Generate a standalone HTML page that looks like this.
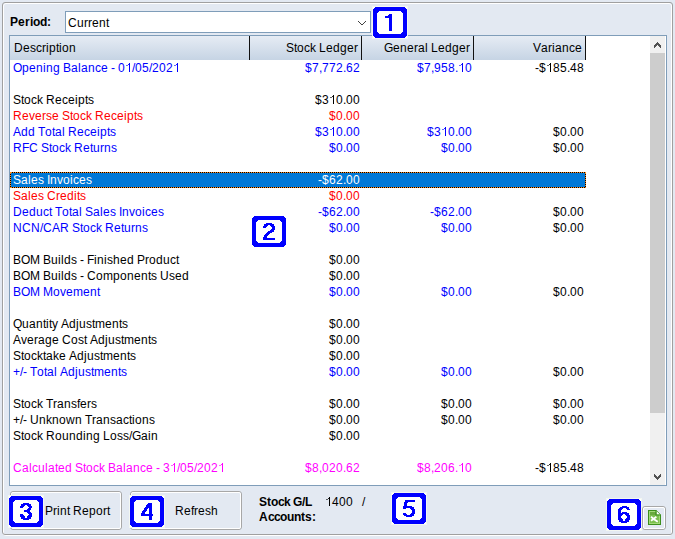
<!DOCTYPE html>
<html><head><meta charset="utf-8">
<style>
*{margin:0;padding:0;box-sizing:border-box}
html,body{width:675px;height:539px;overflow:hidden;background:#e3e9f2;font-family:"Liberation Sans",sans-serif;font-size:12px;color:#000}
.a{position:absolute}
.t{position:absolute;white-space:nowrap;line-height:16px}
.t s{display:inline-block;text-decoration:none;overflow:visible}
.t s.one{position:relative;color:transparent}
.one i{position:absolute;display:block}
.one .st{left:4px;top:3px;width:1px;height:9px}
.one .f1{left:3px;top:4px;width:1px;height:1px}
.one .f1{opacity:.85}
.one .f2{left:1px;top:5px;width:2px;height:1px;opacity:.6}
.l15 .one .st{top:2px}.l15 .one .f1{top:3px}.l15 .one .f2{top:4px}
.t .one i{background:#000}.bl .one i{background:#0000ff}.mg .one i{background:#ff00ff}.wh .one i{background:#fff}.rd .one i{background:#ff0000}
.bl{color:#0000ff}.rd{color:#ff0000}.mg{color:#ff00ff}.wh{color:#fff}
.box{position:absolute;width:34px;height:31px;background:#0000ff;
 clip-path:polygon(2px 0,32px 0,34px 2px,34px 29px,32px 31px,2px 31px,0 29px,0 2px)}
.box i{position:absolute;left:4px;top:4px;width:26px;height:23px;background:#fff;
 clip-path:polygon(2px 0,24px 0,26px 2px,26px 21px,24px 23px,2px 23px,0 21px,0 2px)}
.box b{position:absolute;left:0;top:0;width:34px;height:31px;text-align:center;line-height:31px;font-size:24px;font-weight:bold;color:#0000ff}
.halo{position:absolute;width:36px;height:33px;background:#fff;
 clip-path:polygon(3px 0,33px 0,36px 3px,36px 30px,33px 33px,3px 33px,0 30px,0 3px)}
.btn{position:absolute;border:1px solid #a7a7a7;border-radius:3px;background:#e3e9f2}
.btn:before{content:"";position:absolute;left:0;top:0;right:0;bottom:0;border:1px solid #fff;border-radius:2px}
</style></head><body>
<div class="a" style="left:3px;top:3px;width:669px;height:533px;border:1px solid #fff;border-radius:3px"></div>
<div class="a" style="left:2px;top:2px;width:671px;height:533px;border:1px solid #a0a0a0;border-radius:3px"></div>
<div class="t" style="left:10px;top:14px;font-weight:bold;"><s style="width:8px">P</s><s style="width:7px">e</s><s style="width:5px">r</s><s style="width:3px">i</s><s style="width:7px">o</s><s style="width:7px">d</s><s style="width:4px">:</s></div>
<div class="a" style="left:65px;top:11px;width:306px;height:22px;background:#fff;border:1px solid #7f9db9"></div>
<div class="t" style="left:68px;top:15px;"><s style="width:9px">C</s><s style="width:7px">u</s><s style="width:4px">r</s><s style="width:4px">r</s><s style="width:7px">e</s><s style="width:7px">n</s><s style="width:3px">t</s></div>
<svg class="a" style="left:354px;top:16px" width="16" height="12" shape-rendering="crispEdges"><path d="M4 5h1v1h-1zM11 5h1v1h-1zM5 6h1v1h-1zM10 6h1v1h-1zM6 7h1v1h-1zM9 7h1v1h-1zM7 8h2v1h-2z" fill="#404040"/></svg>
<div class="a" style="left:9px;top:35px;width:658px;height:451px;background:#fff;border:1px solid #7f9db9"></div>
<div class="a" style="left:10px;top:36px;width:576px;height:24px;background:linear-gradient(#e6ecf4,#c6d4e4)"></div>
<div class="a" style="left:249px;top:36px;width:1px;height:24px;background:#111"></div>
<div class="a" style="left:361px;top:36px;width:1px;height:24px;background:#111"></div>
<div class="a" style="left:473px;top:36px;width:1px;height:24px;background:#111"></div>
<div class="a" style="left:585px;top:36px;width:1px;height:24px;background:#111"></div>
<div class="t" style="left:14px;top:40px;"><s style="width:9px">D</s><s style="width:7px">e</s><s style="width:6px">s</s><s style="width:6px">c</s><s style="width:4px">r</s><s style="width:3px">i</s><s style="width:7px">p</s><s style="width:3px">t</s><s style="width:3px">i</s><s style="width:7px">o</s><s style="width:7px">n</s></div>
<div class="t" style="left:286px;top:40px;"><s style="width:8px">S</s><s style="width:3px">t</s><s style="width:7px">o</s><s style="width:6px">c</s><s style="width:6px">k</s><s style="width:3px">&nbsp;</s><s style="width:7px">L</s><s style="width:7px">e</s><s style="width:7px">d</s><s style="width:7px">g</s><s style="width:7px">e</s><s style="width:4px">r</s></div>
<div class="t" style="left:384px;top:40px;"><s style="width:9px">G</s><s style="width:7px">e</s><s style="width:7px">n</s><s style="width:7px">e</s><s style="width:4px">r</s><s style="width:7px">a</s><s style="width:3px">l</s><s style="width:3px">&nbsp;</s><s style="width:7px">L</s><s style="width:7px">e</s><s style="width:7px">d</s><s style="width:7px">g</s><s style="width:7px">e</s><s style="width:4px">r</s></div>
<div class="t" style="left:533px;top:40px;"><s style="width:8px">V</s><s style="width:7px">a</s><s style="width:4px">r</s><s style="width:3px">i</s><s style="width:7px">a</s><s style="width:7px">n</s><s style="width:6px">c</s><s style="width:7px">e</s></div>
<div class="a" style="left:650px;top:36px;width:15px;height:449px;background:#f0f0f0"></div>
<div class="a" style="left:650px;top:53px;width:15px;height:360px;background:#cdcdcd"></div>
<svg class="a" style="left:651px;top:39px" width="16" height="12" shape-rendering="crispEdges"><path d="M6 3h1v1h-1zM5 4h3v1h-3zM4 5h5v1h-5zM3 6h3v1h-3zM7 6h3v1h-3zM3 7h2v1h-2zM8 7h2v1h-2zM3 8h1v1h-1zM9 8h1v1h-1z" fill="#505050"/></svg>
<svg class="a" style="left:651px;top:471px" width="16" height="12" shape-rendering="crispEdges"><path d="M3 3h1v1h-1zM9 3h1v1h-1zM3 4h2v1h-2zM8 4h2v1h-2zM3 5h3v1h-3zM7 5h3v1h-3zM4 6h5v1h-5zM5 7h3v1h-3zM6 8h1v1h-1z" fill="#505050"/></svg>
<div class="a" style="left:10px;top:172px;width:576px;height:16px;background:#0078d7"></div>
<div class="a" style="left:10px;top:172px;width:576px;height:16px;border:1px solid #000"></div>
<div class="a" style="left:10px;top:172px;width:576px;height:16px;border:1px dotted #ff8c1a"></div>
<div class="t bl" style="left:13px;top:60px;"><s style="width:9px">O</s><s style="width:7px">p</s><s style="width:7px">e</s><s style="width:7px">n</s><s style="width:3px">i</s><s style="width:7px">n</s><s style="width:7px">g</s><s style="width:3px">&nbsp;</s><s style="width:8px">B</s><s style="width:7px">a</s><s style="width:3px">l</s><s style="width:7px">a</s><s style="width:7px">n</s><s style="width:6px">c</s><s style="width:7px">e</s><s style="width:3px">&nbsp;</s><s style="width:4px">-</s><s style="width:3px">&nbsp;</s><s style="width:7px">0</s><s class="one" style="width:7px">1<i class="st"></i><i class="f1"></i><i class="f2"></i></s><s style="width:3px">/</s><s style="width:7px">0</s><s style="width:7px">5</s><s style="width:3px">/</s><s style="width:7px">2</s><s style="width:7px">0</s><s style="width:7px">2</s><s class="one" style="width:7px">1<i class="st"></i><i class="f1"></i><i class="f2"></i></s></div>
<div class="t bl" style="left:305px;top:60px;"><s style="width:7px">$</s><s style="width:7px">7</s><s style="width:3px">,</s><s style="width:7px">7</s><s style="width:7px">7</s><s style="width:7px">2</s><s style="width:3px">.</s><s style="width:7px">6</s><s style="width:7px">2</s></div>
<div class="t bl" style="left:417px;top:60px;"><s style="width:7px">$</s><s style="width:7px">7</s><s style="width:3px">,</s><s style="width:7px">9</s><s style="width:7px">5</s><s style="width:7px">8</s><s style="width:3px">.</s><s class="one" style="width:7px">1<i class="st"></i><i class="f1"></i><i class="f2"></i></s><s style="width:7px">0</s></div>
<div class="t" style="left:535px;top:60px;"><s style="width:4px">-</s><s style="width:7px">$</s><s class="one" style="width:7px">1<i class="st"></i><i class="f1"></i><i class="f2"></i></s><s style="width:7px">8</s><s style="width:7px">5</s><s style="width:3px">.</s><s style="width:7px">4</s><s style="width:7px">8</s></div>
<div class="t" style="left:13px;top:92px;"><s style="width:8px">S</s><s style="width:3px">t</s><s style="width:7px">o</s><s style="width:6px">c</s><s style="width:6px">k</s><s style="width:3px">&nbsp;</s><s style="width:9px">R</s><s style="width:7px">e</s><s style="width:6px">c</s><s style="width:7px">e</s><s style="width:3px">i</s><s style="width:7px">p</s><s style="width:3px">t</s><s style="width:6px">s</s></div>
<div class="t" style="left:315px;top:92px;"><s style="width:7px">$</s><s style="width:7px">3</s><s class="one" style="width:7px">1<i class="st"></i><i class="f1"></i><i class="f2"></i></s><s style="width:7px">0</s><s style="width:3px">.</s><s style="width:7px">0</s><s style="width:7px">0</s></div>
<div class="t rd" style="left:13px;top:108px;"><s style="width:9px">R</s><s style="width:7px">e</s><s style="width:6px">v</s><s style="width:7px">e</s><s style="width:4px">r</s><s style="width:6px">s</s><s style="width:7px">e</s><s style="width:3px">&nbsp;</s><s style="width:8px">S</s><s style="width:3px">t</s><s style="width:7px">o</s><s style="width:6px">c</s><s style="width:6px">k</s><s style="width:3px">&nbsp;</s><s style="width:9px">R</s><s style="width:7px">e</s><s style="width:6px">c</s><s style="width:7px">e</s><s style="width:3px">i</s><s style="width:7px">p</s><s style="width:3px">t</s><s style="width:6px">s</s></div>
<div class="t rd" style="left:329px;top:108px;"><s style="width:7px">$</s><s style="width:7px">0</s><s style="width:3px">.</s><s style="width:7px">0</s><s style="width:7px">0</s></div>
<div class="t bl" style="left:13px;top:124px;"><s style="width:8px">A</s><s style="width:7px">d</s><s style="width:7px">d</s><s style="width:3px">&nbsp;</s><s style="width:7px">T</s><s style="width:7px">o</s><s style="width:3px">t</s><s style="width:7px">a</s><s style="width:3px">l</s><s style="width:3px">&nbsp;</s><s style="width:9px">R</s><s style="width:7px">e</s><s style="width:6px">c</s><s style="width:7px">e</s><s style="width:3px">i</s><s style="width:7px">p</s><s style="width:3px">t</s><s style="width:6px">s</s></div>
<div class="t bl" style="left:315px;top:124px;"><s style="width:7px">$</s><s style="width:7px">3</s><s class="one" style="width:7px">1<i class="st"></i><i class="f1"></i><i class="f2"></i></s><s style="width:7px">0</s><s style="width:3px">.</s><s style="width:7px">0</s><s style="width:7px">0</s></div>
<div class="t bl" style="left:427px;top:124px;"><s style="width:7px">$</s><s style="width:7px">3</s><s class="one" style="width:7px">1<i class="st"></i><i class="f1"></i><i class="f2"></i></s><s style="width:7px">0</s><s style="width:3px">.</s><s style="width:7px">0</s><s style="width:7px">0</s></div>
<div class="t" style="left:553px;top:124px;"><s style="width:7px">$</s><s style="width:7px">0</s><s style="width:3px">.</s><s style="width:7px">0</s><s style="width:7px">0</s></div>
<div class="t bl" style="left:13px;top:140px;"><s style="width:9px">R</s><s style="width:7px">F</s><s style="width:9px">C</s><s style="width:3px">&nbsp;</s><s style="width:8px">S</s><s style="width:3px">t</s><s style="width:7px">o</s><s style="width:6px">c</s><s style="width:6px">k</s><s style="width:3px">&nbsp;</s><s style="width:9px">R</s><s style="width:7px">e</s><s style="width:3px">t</s><s style="width:7px">u</s><s style="width:4px">r</s><s style="width:7px">n</s><s style="width:6px">s</s></div>
<div class="t bl" style="left:329px;top:140px;"><s style="width:7px">$</s><s style="width:7px">0</s><s style="width:3px">.</s><s style="width:7px">0</s><s style="width:7px">0</s></div>
<div class="t bl" style="left:441px;top:140px;"><s style="width:7px">$</s><s style="width:7px">0</s><s style="width:3px">.</s><s style="width:7px">0</s><s style="width:7px">0</s></div>
<div class="t" style="left:553px;top:140px;"><s style="width:7px">$</s><s style="width:7px">0</s><s style="width:3px">.</s><s style="width:7px">0</s><s style="width:7px">0</s></div>
<div class="t wh" style="left:13px;top:172px;"><s style="width:8px">S</s><s style="width:7px">a</s><s style="width:3px">l</s><s style="width:7px">e</s><s style="width:6px">s</s><s style="width:3px">&nbsp;</s><s style="width:3px">I</s><s style="width:7px">n</s><s style="width:6px">v</s><s style="width:7px">o</s><s style="width:3px">i</s><s style="width:6px">c</s><s style="width:7px">e</s><s style="width:6px">s</s></div>
<div class="t wh" style="left:318px;top:172px;"><s style="width:4px">-</s><s style="width:7px">$</s><s style="width:7px">6</s><s style="width:7px">2</s><s style="width:3px">.</s><s style="width:7px">0</s><s style="width:7px">0</s></div>
<div class="t rd" style="left:13px;top:188px;"><s style="width:8px">S</s><s style="width:7px">a</s><s style="width:3px">l</s><s style="width:7px">e</s><s style="width:6px">s</s><s style="width:3px">&nbsp;</s><s style="width:9px">C</s><s style="width:4px">r</s><s style="width:7px">e</s><s style="width:7px">d</s><s style="width:3px">i</s><s style="width:3px">t</s><s style="width:6px">s</s></div>
<div class="t rd" style="left:329px;top:188px;"><s style="width:7px">$</s><s style="width:7px">0</s><s style="width:3px">.</s><s style="width:7px">0</s><s style="width:7px">0</s></div>
<div class="t bl" style="left:13px;top:204px;"><s style="width:9px">D</s><s style="width:7px">e</s><s style="width:7px">d</s><s style="width:7px">u</s><s style="width:6px">c</s><s style="width:3px">t</s><s style="width:3px">&nbsp;</s><s style="width:7px">T</s><s style="width:7px">o</s><s style="width:3px">t</s><s style="width:7px">a</s><s style="width:3px">l</s><s style="width:3px">&nbsp;</s><s style="width:8px">S</s><s style="width:7px">a</s><s style="width:3px">l</s><s style="width:7px">e</s><s style="width:6px">s</s><s style="width:3px">&nbsp;</s><s style="width:3px">I</s><s style="width:7px">n</s><s style="width:6px">v</s><s style="width:7px">o</s><s style="width:3px">i</s><s style="width:6px">c</s><s style="width:7px">e</s><s style="width:6px">s</s></div>
<div class="t bl" style="left:318px;top:204px;"><s style="width:4px">-</s><s style="width:7px">$</s><s style="width:7px">6</s><s style="width:7px">2</s><s style="width:3px">.</s><s style="width:7px">0</s><s style="width:7px">0</s></div>
<div class="t bl" style="left:430px;top:204px;"><s style="width:4px">-</s><s style="width:7px">$</s><s style="width:7px">6</s><s style="width:7px">2</s><s style="width:3px">.</s><s style="width:7px">0</s><s style="width:7px">0</s></div>
<div class="t" style="left:553px;top:204px;"><s style="width:7px">$</s><s style="width:7px">0</s><s style="width:3px">.</s><s style="width:7px">0</s><s style="width:7px">0</s></div>
<div class="t bl" style="left:13px;top:220px;"><s style="width:9px">N</s><s style="width:9px">C</s><s style="width:9px">N</s><s style="width:3px">/</s><s style="width:9px">C</s><s style="width:8px">A</s><s style="width:9px">R</s><s style="width:3px">&nbsp;</s><s style="width:8px">S</s><s style="width:3px">t</s><s style="width:7px">o</s><s style="width:6px">c</s><s style="width:6px">k</s><s style="width:3px">&nbsp;</s><s style="width:9px">R</s><s style="width:7px">e</s><s style="width:3px">t</s><s style="width:7px">u</s><s style="width:4px">r</s><s style="width:7px">n</s><s style="width:6px">s</s></div>
<div class="t bl" style="left:329px;top:220px;"><s style="width:7px">$</s><s style="width:7px">0</s><s style="width:3px">.</s><s style="width:7px">0</s><s style="width:7px">0</s></div>
<div class="t bl" style="left:441px;top:220px;"><s style="width:7px">$</s><s style="width:7px">0</s><s style="width:3px">.</s><s style="width:7px">0</s><s style="width:7px">0</s></div>
<div class="t" style="left:553px;top:220px;"><s style="width:7px">$</s><s style="width:7px">0</s><s style="width:3px">.</s><s style="width:7px">0</s><s style="width:7px">0</s></div>
<div class="t" style="left:13px;top:252px;"><s style="width:8px">B</s><s style="width:9px">O</s><s style="width:10px">M</s><s style="width:3px">&nbsp;</s><s style="width:8px">B</s><s style="width:7px">u</s><s style="width:3px">i</s><s style="width:3px">l</s><s style="width:7px">d</s><s style="width:6px">s</s><s style="width:3px">&nbsp;</s><s style="width:4px">-</s><s style="width:3px">&nbsp;</s><s style="width:7px">F</s><s style="width:3px">i</s><s style="width:7px">n</s><s style="width:3px">i</s><s style="width:6px">s</s><s style="width:7px">h</s><s style="width:7px">e</s><s style="width:7px">d</s><s style="width:3px">&nbsp;</s><s style="width:8px">P</s><s style="width:4px">r</s><s style="width:7px">o</s><s style="width:7px">d</s><s style="width:7px">u</s><s style="width:6px">c</s><s style="width:3px">t</s></div>
<div class="t" style="left:329px;top:252px;"><s style="width:7px">$</s><s style="width:7px">0</s><s style="width:3px">.</s><s style="width:7px">0</s><s style="width:7px">0</s></div>
<div class="t" style="left:13px;top:268px;"><s style="width:8px">B</s><s style="width:9px">O</s><s style="width:10px">M</s><s style="width:3px">&nbsp;</s><s style="width:8px">B</s><s style="width:7px">u</s><s style="width:3px">i</s><s style="width:3px">l</s><s style="width:7px">d</s><s style="width:6px">s</s><s style="width:3px">&nbsp;</s><s style="width:4px">-</s><s style="width:3px">&nbsp;</s><s style="width:9px">C</s><s style="width:7px">o</s><s style="width:10px">m</s><s style="width:7px">p</s><s style="width:7px">o</s><s style="width:7px">n</s><s style="width:7px">e</s><s style="width:7px">n</s><s style="width:3px">t</s><s style="width:6px">s</s><s style="width:3px">&nbsp;</s><s style="width:9px">U</s><s style="width:6px">s</s><s style="width:7px">e</s><s style="width:7px">d</s></div>
<div class="t" style="left:329px;top:268px;"><s style="width:7px">$</s><s style="width:7px">0</s><s style="width:3px">.</s><s style="width:7px">0</s><s style="width:7px">0</s></div>
<div class="t bl" style="left:13px;top:284px;"><s style="width:8px">B</s><s style="width:9px">O</s><s style="width:10px">M</s><s style="width:3px">&nbsp;</s><s style="width:10px">M</s><s style="width:7px">o</s><s style="width:6px">v</s><s style="width:7px">e</s><s style="width:10px">m</s><s style="width:7px">e</s><s style="width:7px">n</s><s style="width:3px">t</s></div>
<div class="t bl" style="left:329px;top:284px;"><s style="width:7px">$</s><s style="width:7px">0</s><s style="width:3px">.</s><s style="width:7px">0</s><s style="width:7px">0</s></div>
<div class="t bl" style="left:441px;top:284px;"><s style="width:7px">$</s><s style="width:7px">0</s><s style="width:3px">.</s><s style="width:7px">0</s><s style="width:7px">0</s></div>
<div class="t" style="left:553px;top:284px;"><s style="width:7px">$</s><s style="width:7px">0</s><s style="width:3px">.</s><s style="width:7px">0</s><s style="width:7px">0</s></div>
<div class="t" style="left:13px;top:316px;"><s style="width:9px">Q</s><s style="width:7px">u</s><s style="width:7px">a</s><s style="width:7px">n</s><s style="width:3px">t</s><s style="width:3px">i</s><s style="width:3px">t</s><s style="width:6px">y</s><s style="width:3px">&nbsp;</s><s style="width:8px">A</s><s style="width:7px">d</s><s style="width:3px">j</s><s style="width:7px">u</s><s style="width:6px">s</s><s style="width:3px">t</s><s style="width:10px">m</s><s style="width:7px">e</s><s style="width:7px">n</s><s style="width:3px">t</s><s style="width:6px">s</s></div>
<div class="t" style="left:329px;top:316px;"><s style="width:7px">$</s><s style="width:7px">0</s><s style="width:3px">.</s><s style="width:7px">0</s><s style="width:7px">0</s></div>
<div class="t" style="left:13px;top:332px;"><s style="width:8px">A</s><s style="width:6px">v</s><s style="width:7px">e</s><s style="width:4px">r</s><s style="width:7px">a</s><s style="width:7px">g</s><s style="width:7px">e</s><s style="width:3px">&nbsp;</s><s style="width:9px">C</s><s style="width:7px">o</s><s style="width:6px">s</s><s style="width:3px">t</s><s style="width:3px">&nbsp;</s><s style="width:8px">A</s><s style="width:7px">d</s><s style="width:3px">j</s><s style="width:7px">u</s><s style="width:6px">s</s><s style="width:3px">t</s><s style="width:10px">m</s><s style="width:7px">e</s><s style="width:7px">n</s><s style="width:3px">t</s><s style="width:6px">s</s></div>
<div class="t" style="left:329px;top:332px;"><s style="width:7px">$</s><s style="width:7px">0</s><s style="width:3px">.</s><s style="width:7px">0</s><s style="width:7px">0</s></div>
<div class="t" style="left:13px;top:348px;"><s style="width:8px">S</s><s style="width:3px">t</s><s style="width:7px">o</s><s style="width:6px">c</s><s style="width:6px">k</s><s style="width:3px">t</s><s style="width:7px">a</s><s style="width:6px">k</s><s style="width:7px">e</s><s style="width:3px">&nbsp;</s><s style="width:8px">A</s><s style="width:7px">d</s><s style="width:3px">j</s><s style="width:7px">u</s><s style="width:6px">s</s><s style="width:3px">t</s><s style="width:10px">m</s><s style="width:7px">e</s><s style="width:7px">n</s><s style="width:3px">t</s><s style="width:6px">s</s></div>
<div class="t" style="left:329px;top:348px;"><s style="width:7px">$</s><s style="width:7px">0</s><s style="width:3px">.</s><s style="width:7px">0</s><s style="width:7px">0</s></div>
<div class="t bl" style="left:13px;top:364px;"><s style="width:7px">+</s><s style="width:3px">/</s><s style="width:4px">-</s><s style="width:3px">&nbsp;</s><s style="width:7px">T</s><s style="width:7px">o</s><s style="width:3px">t</s><s style="width:7px">a</s><s style="width:3px">l</s><s style="width:3px">&nbsp;</s><s style="width:8px">A</s><s style="width:7px">d</s><s style="width:3px">j</s><s style="width:7px">u</s><s style="width:6px">s</s><s style="width:3px">t</s><s style="width:10px">m</s><s style="width:7px">e</s><s style="width:7px">n</s><s style="width:3px">t</s><s style="width:6px">s</s></div>
<div class="t bl" style="left:329px;top:364px;"><s style="width:7px">$</s><s style="width:7px">0</s><s style="width:3px">.</s><s style="width:7px">0</s><s style="width:7px">0</s></div>
<div class="t bl" style="left:441px;top:364px;"><s style="width:7px">$</s><s style="width:7px">0</s><s style="width:3px">.</s><s style="width:7px">0</s><s style="width:7px">0</s></div>
<div class="t" style="left:553px;top:364px;"><s style="width:7px">$</s><s style="width:7px">0</s><s style="width:3px">.</s><s style="width:7px">0</s><s style="width:7px">0</s></div>
<div class="t" style="left:13px;top:396px;"><s style="width:8px">S</s><s style="width:3px">t</s><s style="width:7px">o</s><s style="width:6px">c</s><s style="width:6px">k</s><s style="width:3px">&nbsp;</s><s style="width:7px">T</s><s style="width:4px">r</s><s style="width:7px">a</s><s style="width:7px">n</s><s style="width:6px">s</s><s style="width:3px">f</s><s style="width:7px">e</s><s style="width:4px">r</s><s style="width:6px">s</s></div>
<div class="t" style="left:329px;top:396px;"><s style="width:7px">$</s><s style="width:7px">0</s><s style="width:3px">.</s><s style="width:7px">0</s><s style="width:7px">0</s></div>
<div class="t" style="left:441px;top:396px;"><s style="width:7px">$</s><s style="width:7px">0</s><s style="width:3px">.</s><s style="width:7px">0</s><s style="width:7px">0</s></div>
<div class="t" style="left:553px;top:396px;"><s style="width:7px">$</s><s style="width:7px">0</s><s style="width:3px">.</s><s style="width:7px">0</s><s style="width:7px">0</s></div>
<div class="t" style="left:13px;top:412px;"><s style="width:7px">+</s><s style="width:3px">/</s><s style="width:4px">-</s><s style="width:3px">&nbsp;</s><s style="width:9px">U</s><s style="width:7px">n</s><s style="width:6px">k</s><s style="width:7px">n</s><s style="width:7px">o</s><s style="width:9px">w</s><s style="width:7px">n</s><s style="width:3px">&nbsp;</s><s style="width:7px">T</s><s style="width:4px">r</s><s style="width:7px">a</s><s style="width:7px">n</s><s style="width:6px">s</s><s style="width:7px">a</s><s style="width:6px">c</s><s style="width:3px">t</s><s style="width:3px">i</s><s style="width:7px">o</s><s style="width:7px">n</s><s style="width:6px">s</s></div>
<div class="t" style="left:329px;top:412px;"><s style="width:7px">$</s><s style="width:7px">0</s><s style="width:3px">.</s><s style="width:7px">0</s><s style="width:7px">0</s></div>
<div class="t" style="left:441px;top:412px;"><s style="width:7px">$</s><s style="width:7px">0</s><s style="width:3px">.</s><s style="width:7px">0</s><s style="width:7px">0</s></div>
<div class="t" style="left:553px;top:412px;"><s style="width:7px">$</s><s style="width:7px">0</s><s style="width:3px">.</s><s style="width:7px">0</s><s style="width:7px">0</s></div>
<div class="t" style="left:13px;top:428px;"><s style="width:8px">S</s><s style="width:3px">t</s><s style="width:7px">o</s><s style="width:6px">c</s><s style="width:6px">k</s><s style="width:3px">&nbsp;</s><s style="width:9px">R</s><s style="width:7px">o</s><s style="width:7px">u</s><s style="width:7px">n</s><s style="width:7px">d</s><s style="width:3px">i</s><s style="width:7px">n</s><s style="width:7px">g</s><s style="width:3px">&nbsp;</s><s style="width:7px">L</s><s style="width:7px">o</s><s style="width:6px">s</s><s style="width:6px">s</s><s style="width:3px">/</s><s style="width:9px">G</s><s style="width:7px">a</s><s style="width:3px">i</s><s style="width:7px">n</s></div>
<div class="t" style="left:329px;top:428px;"><s style="width:7px">$</s><s style="width:7px">0</s><s style="width:3px">.</s><s style="width:7px">0</s><s style="width:7px">0</s></div>
<div class="t mg" style="left:13px;top:460px;"><s style="width:9px">C</s><s style="width:7px">a</s><s style="width:3px">l</s><s style="width:6px">c</s><s style="width:7px">u</s><s style="width:3px">l</s><s style="width:7px">a</s><s style="width:3px">t</s><s style="width:7px">e</s><s style="width:7px">d</s><s style="width:3px">&nbsp;</s><s style="width:8px">S</s><s style="width:3px">t</s><s style="width:7px">o</s><s style="width:6px">c</s><s style="width:6px">k</s><s style="width:3px">&nbsp;</s><s style="width:8px">B</s><s style="width:7px">a</s><s style="width:3px">l</s><s style="width:7px">a</s><s style="width:7px">n</s><s style="width:6px">c</s><s style="width:7px">e</s><s style="width:3px">&nbsp;</s><s style="width:4px">-</s><s style="width:3px">&nbsp;</s><s style="width:7px">3</s><s class="one" style="width:7px">1<i class="st"></i><i class="f1"></i><i class="f2"></i></s><s style="width:3px">/</s><s style="width:7px">0</s><s style="width:7px">5</s><s style="width:3px">/</s><s style="width:7px">2</s><s style="width:7px">0</s><s style="width:7px">2</s><s class="one" style="width:7px">1<i class="st"></i><i class="f1"></i><i class="f2"></i></s></div>
<div class="t mg" style="left:305px;top:460px;"><s style="width:7px">$</s><s style="width:7px">8</s><s style="width:3px">,</s><s style="width:7px">0</s><s style="width:7px">2</s><s style="width:7px">0</s><s style="width:3px">.</s><s style="width:7px">6</s><s style="width:7px">2</s></div>
<div class="t mg" style="left:417px;top:460px;"><s style="width:7px">$</s><s style="width:7px">8</s><s style="width:3px">,</s><s style="width:7px">2</s><s style="width:7px">0</s><s style="width:7px">6</s><s style="width:3px">.</s><s class="one" style="width:7px">1<i class="st"></i><i class="f1"></i><i class="f2"></i></s><s style="width:7px">0</s></div>
<div class="t" style="left:535px;top:460px;"><s style="width:4px">-</s><s style="width:7px">$</s><s class="one" style="width:7px">1<i class="st"></i><i class="f1"></i><i class="f2"></i></s><s style="width:7px">8</s><s style="width:7px">5</s><s style="width:3px">.</s><s style="width:7px">4</s><s style="width:7px">8</s></div>
<div class="btn" style="left:10px;top:491px;width:112px;height:39px"></div>
<div class="t" style="left:45px;top:503px;"><s style="width:8px">P</s><s style="width:4px">r</s><s style="width:3px">i</s><s style="width:7px">n</s><s style="width:3px">t</s><s style="width:3px">&nbsp;</s><s style="width:9px">R</s><s style="width:7px">e</s><s style="width:7px">p</s><s style="width:7px">o</s><s style="width:4px">r</s><s style="width:3px">t</s></div>
<div class="btn" style="left:130px;top:491px;width:112px;height:39px"></div>
<div class="t" style="left:175px;top:503px;"><s style="width:9px">R</s><s style="width:7px">e</s><s style="width:3px">f</s><s style="width:4px">r</s><s style="width:7px">e</s><s style="width:6px">s</s><s style="width:7px">h</s></div>
<div class="t l15" style="left:259px;top:495px;font-weight:bold;line-height:15px;"><s style="width:8px">S</s><s style="width:4px">t</s><s style="width:7px">o</s><s style="width:6px">c</s><s style="width:6px">k</s><s style="width:3px">&nbsp;</s><s style="width:9px">G</s><s style="width:3px">/</s><s style="width:7px">L</s></div>
<div class="t l15" style="left:259px;top:510px;font-weight:bold;line-height:15px;"><s style="width:9px">A</s><s style="width:6px">c</s><s style="width:6px">c</s><s style="width:7px">o</s><s style="width:7px">u</s><s style="width:7px">n</s><s style="width:4px">t</s><s style="width:7px">s</s><s style="width:4px">:</s></div>
<div class="t l15" style="left:325px;top:495px;line-height:15px;"><s class="one" style="width:7px">1<i class="st"></i><i class="f1"></i><i class="f2"></i></s><s style="width:7px">4</s><s style="width:7px">0</s><s style="width:7px">0</s></div>
<div class="t l15" style="left:362px;top:495px;line-height:15px;"><s style="width:3px">/</s></div>
<div class="btn" style="left:642px;top:506px;width:24px;height:24px"></div>
<svg class="a" style="left:646px;top:508px" width="18" height="19" viewBox="0 0 18 19">
<rect x="2.5" y="2.5" width="12" height="14" fill="#7cbf50" stroke="#3d8f1d"/>
<rect x="3.5" y="3.5" width="10" height="12" fill="none" stroke="#a2da78"/>
<rect x="4" y="4" width="6" height="3" fill="#6aa93f"/>
<path d="M10 2 L15 7 V2 Z" fill="#e3e9f2"/>
<path d="M10.2 2.5 L14.5 6.8" stroke="#3d8f1d" fill="none"/>
<path d="M10.5 3 L14 6.5 H10.5 Z" fill="#fff"/>
<path d="M10 3 V7 H14.5" stroke="#3d8f1d" stroke-width="1.2" fill="none"/>
<path d="M5 8.8 L8 11.2 L11.8 13.8 M10.4 8.8 L5 12.8" stroke="#fff" stroke-width="1.8" fill="none"/>
</svg>
<svg class="a" style="left:372px;top:6px" width="36" height="33" viewBox="-1 -1 36 33" shape-rendering="crispEdges"><rect x="-1" y="-1" width="36" height="33" fill="#f3f7f1"/><rect x="0" y="0" width="34" height="31" fill="#fff"/><path d="M2 0H32V1H33V2H34V29H33V30H32V31H2V30H1V29H0V2H1V1H2Z" fill="#0000ff"/><path d="M6 4H28V5H29V6H30V25H29V26H28V27H6V26H5V25H4V6H5V5H6Z" fill="#fff"/><path d="M16 7h3v1h-3zM15 8h4v1h-4zM12 9h7v1h-7zM12 10h7v1h-7zM16 11h3v1h-3zM16 12h3v1h-3zM16 13h3v1h-3zM16 14h3v1h-3zM16 15h3v1h-3zM16 16h3v1h-3zM16 17h3v1h-3zM16 18h3v1h-3zM16 19h3v1h-3zM16 20h3v1h-3zM16 21h3v1h-3zM16 22h3v1h-3zM16 23h3v1h-3z" fill="#0000ff"/></svg>
<svg class="a" style="left:251px;top:215px" width="36" height="33" viewBox="-1 -1 36 33" shape-rendering="crispEdges"><path d="M2 0H32V1H33V2H34V29H33V30H32V31H2V30H1V29H0V2H1V1H2Z" fill="#0000ff"/><path d="M6 4H28V5H29V6H30V25H29V26H28V27H6V26H5V25H4V6H5V5H6Z" fill="#fff"/><path d="M14 7h6v1h-6zM12 8h10v1h-10zM12 9h4v1h-4zM18 9h4v1h-4zM11 10h4v1h-4zM19 10h4v1h-4zM11 11h3v1h-3zM20 11h3v1h-3zM20 12h3v1h-3zM19 13h4v1h-4zM18 14h4v1h-4zM16 15h6v1h-6zM15 16h5v1h-5zM14 17h4v1h-4zM13 18h4v1h-4zM12 19h4v1h-4zM12 20h3v1h-3zM11 21h4v1h-4zM11 22h12v1h-12zM11 23h12v1h-12z" fill="#0000ff"/></svg>
<svg class="a" style="left:8px;top:495px" width="36" height="33" viewBox="-1 -1 36 33" shape-rendering="crispEdges"><rect x="-1" y="-1" width="36" height="33" fill="#f3f7f1"/><rect x="0" y="0" width="34" height="31" fill="#fff"/><path d="M2 0H32V1H33V2H34V29H33V30H32V31H2V30H1V29H0V2H1V1H2Z" fill="#0000ff"/><path d="M6 4H28V5H29V6H30V25H29V26H28V27H6V26H5V25H4V6H5V5H6Z" fill="#fff"/><path d="M14 7h6v1h-6zM12 8h10v1h-10zM12 9h4v1h-4zM18 9h4v1h-4zM11 10h4v1h-4zM19 10h4v1h-4zM11 11h3v1h-3zM20 11h3v1h-3zM19 12h3v1h-3zM18 13h4v1h-4zM15 14h6v1h-6zM15 15h6v1h-6zM18 16h4v1h-4zM19 17h4v1h-4zM11 18h3v1h-3zM20 18h3v1h-3zM11 19h4v1h-4zM19 19h4v1h-4zM11 20h5v1h-5zM18 20h5v1h-5zM12 21h4v1h-4zM18 21h4v1h-4zM12 22h10v1h-10zM14 23h6v1h-6z" fill="#0000ff"/></svg>
<svg class="a" style="left:129px;top:495px" width="36" height="33" viewBox="-1 -1 36 33" shape-rendering="crispEdges"><rect x="-1" y="-1" width="36" height="33" fill="#f3f7f1"/><rect x="0" y="0" width="34" height="31" fill="#fff"/><path d="M2 0H32V1H33V2H34V29H33V30H32V31H2V30H1V29H0V2H1V1H2Z" fill="#0000ff"/><path d="M6 4H28V5H29V6H30V25H29V26H28V27H6V26H5V25H4V6H5V5H6Z" fill="#fff"/><path d="M18 7h4v1h-4zM17 8h5v1h-5zM16 9h6v1h-6zM16 10h6v1h-6zM15 11h7v1h-7zM14 12h4v1h-4zM19 12h3v1h-3zM14 13h3v1h-3zM19 13h3v1h-3zM13 14h4v1h-4zM19 14h3v1h-3zM12 15h4v1h-4zM19 15h3v1h-3zM12 16h3v1h-3zM19 16h3v1h-3zM11 17h4v1h-4zM19 17h3v1h-3zM11 18h12v1h-12zM11 19h12v1h-12zM19 20h3v1h-3zM19 21h3v1h-3zM19 22h3v1h-3zM19 23h3v1h-3z" fill="#0000ff"/></svg>
<svg class="a" style="left:391px;top:492px" width="36" height="33" viewBox="-1 -1 36 33" shape-rendering="crispEdges"><rect x="-1" y="-1" width="36" height="33" fill="#f3f7f1"/><rect x="0" y="0" width="34" height="31" fill="#fff"/><path d="M2 0H32V1H33V2H34V29H33V30H32V31H2V30H1V29H0V2H1V1H2Z" fill="#0000ff"/><path d="M6 4H28V5H29V6H30V25H29V26H28V27H6V26H5V25H4V6H5V5H6Z" fill="#fff"/><path d="M13 7h10v1h-10zM13 8h10v1h-10zM12 9h4v1h-4zM12 10h3v1h-3zM12 11h3v1h-3zM12 12h3v1h-3zM11 13h9v1h-9zM11 14h11v1h-11zM11 15h3v1h-3zM18 15h4v1h-4zM19 16h4v1h-4zM20 17h3v1h-3zM20 18h3v1h-3zM20 19h3v1h-3zM11 20h3v1h-3zM19 20h4v1h-4zM11 21h4v1h-4zM18 21h4v1h-4zM12 22h10v1h-10zM14 23h6v1h-6z" fill="#0000ff"/></svg>
<svg class="a" style="left:606px;top:498px" width="36" height="33" viewBox="-1 -1 36 33" shape-rendering="crispEdges"><rect x="-1" y="-1" width="36" height="33" fill="#f3f7f1"/><rect x="0" y="0" width="34" height="31" fill="#fff"/><path d="M2 0H32V1H33V2H34V29H33V30H32V31H2V30H1V29H0V2H1V1H2Z" fill="#0000ff"/><path d="M6 4H28V5H29V6H30V25H29V26H28V27H6V26H5V25H4V6H5V5H6Z" fill="#fff"/><path d="M15 7h5v1h-5zM13 8h9v1h-9zM12 9h4v1h-4zM19 9h3v1h-3zM11 10h4v1h-4zM20 10h3v1h-3zM11 11h3v1h-3zM11 12h3v1h-3zM11 13h3v1h-3zM15 13h5v1h-5zM11 14h11v1h-11zM11 15h5v1h-5zM18 15h4v1h-4zM11 16h4v1h-4zM19 16h4v1h-4zM11 17h3v1h-3zM20 17h3v1h-3zM11 18h3v1h-3zM20 18h3v1h-3zM11 19h4v1h-4zM19 19h4v1h-4zM11 20h5v1h-5zM18 20h5v1h-5zM12 21h4v1h-4zM18 21h4v1h-4zM12 22h10v1h-10zM14 23h6v1h-6z" fill="#0000ff"/></svg>
</body></html>
